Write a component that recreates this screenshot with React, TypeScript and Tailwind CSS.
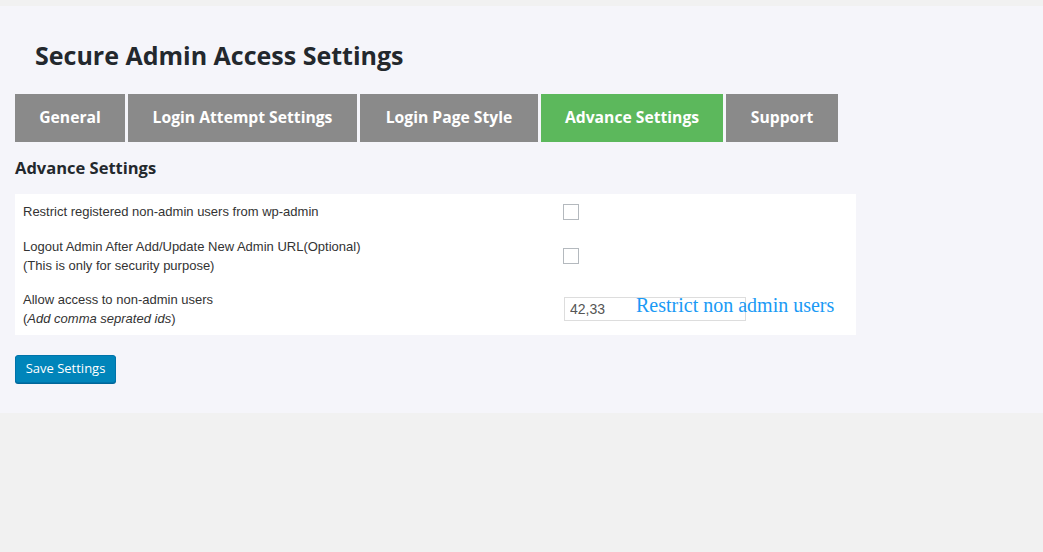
import React from 'react';

const App = () => {
  const tabs = [
    { label: 'General', width: 'w-[110px]', active: false },
    { label: 'Login Attempt Settings', width: 'w-[229px]', active: false },
    { label: 'Login Page Style', width: 'w-[178px]', active: false },
    { label: 'Advance Settings', width: 'w-[182px]', active: true },
    { label: 'Support', width: 'w-[112px]', active: false }
  ];

  return (
    <div className="min-h-[552px] bg-[#f1f1f1] pt-[6px] font-['Liberation_Sans',Arial,sans-serif]">
      <div className="h-[407px] bg-[#f5f5fa] px-[15px]">
        <h1 className="pt-[34px] pl-[20px] font-['Open_Sans',sans-serif] text-[25px] font-bold leading-[30px] text-[#23282d]">
          Secure Admin Access Settings
        </h1>

        {/* Tabs */}
        <div className="mt-[24px] flex gap-[3px]">
          {tabs.map((tab) => (
            <div
              key={tab.label}
              className={`${tab.width} flex h-[48px] items-center justify-center font-['Open_Sans',sans-serif] text-[15.7px] font-bold text-white ${
                tab.active ? 'bg-[#5cb85c]' : 'bg-[#8a8a8a]'
              }`}
            >
              {tab.label}
            </div>
          ))}
        </div>

        <h2 className="mt-[15px] font-['Open_Sans',sans-serif] text-[16.5px] font-bold leading-[22px] text-[#23282d]">
          Advance Settings
        </h2>

        {/* Settings table */}
        <div className="mt-[15px] w-[841px] bg-white text-[13px] leading-[19px] text-[#333]">
          <div className="flex items-center py-[8px]">
            <div className="w-[548px] pl-[8px]">Restrict registered non-admin users from wp-admin</div>
            <input type="checkbox" className="h-[16px] w-[16px] appearance-none border border-[#b4b9be] bg-white" />
          </div>
          <div className="flex items-center py-[8px]">
            <div className="w-[548px] pl-[8px]">
              Logout Admin After Add/Update New Admin URL(Optional)
              <br />
              (This is only for security purpose)
            </div>
            <input type="checkbox" className="h-[16px] w-[16px] appearance-none border border-[#b4b9be] bg-white" />
          </div>
          <div className="flex items-center pt-[7px] pb-[7px]">
            <div className="w-[549px] pl-[8px]">
              Allow access to non-admin users
              <br />(<i>Add comma seprated ids</i>)
            </div>
            <div className="flex items-center">
              <input
                type="text"
                defaultValue="42,33"
                className="h-[24px] w-[182px] border border-[#ddd] bg-white px-[5px] text-[14px] text-[#555] outline-none"
              />
              <span className="-mt-[8px] -ml-[110px] font-['Liberation_Serif',serif] text-[20px] leading-[24px] text-[#1a9af5]">
                Restrict non admin users
              </span>
            </div>
          </div>
        </div>

        <button className="mt-[20px] h-[28px] w-[101px] rounded-[3px] border border-[#0073aa] bg-[#0085ba] font-['Open_Sans',sans-serif] text-[13px] text-white shadow-[0_1px_0_#006799]">
          Save Settings
        </button>
      </div>
    </div>
  );
};

export default App;
